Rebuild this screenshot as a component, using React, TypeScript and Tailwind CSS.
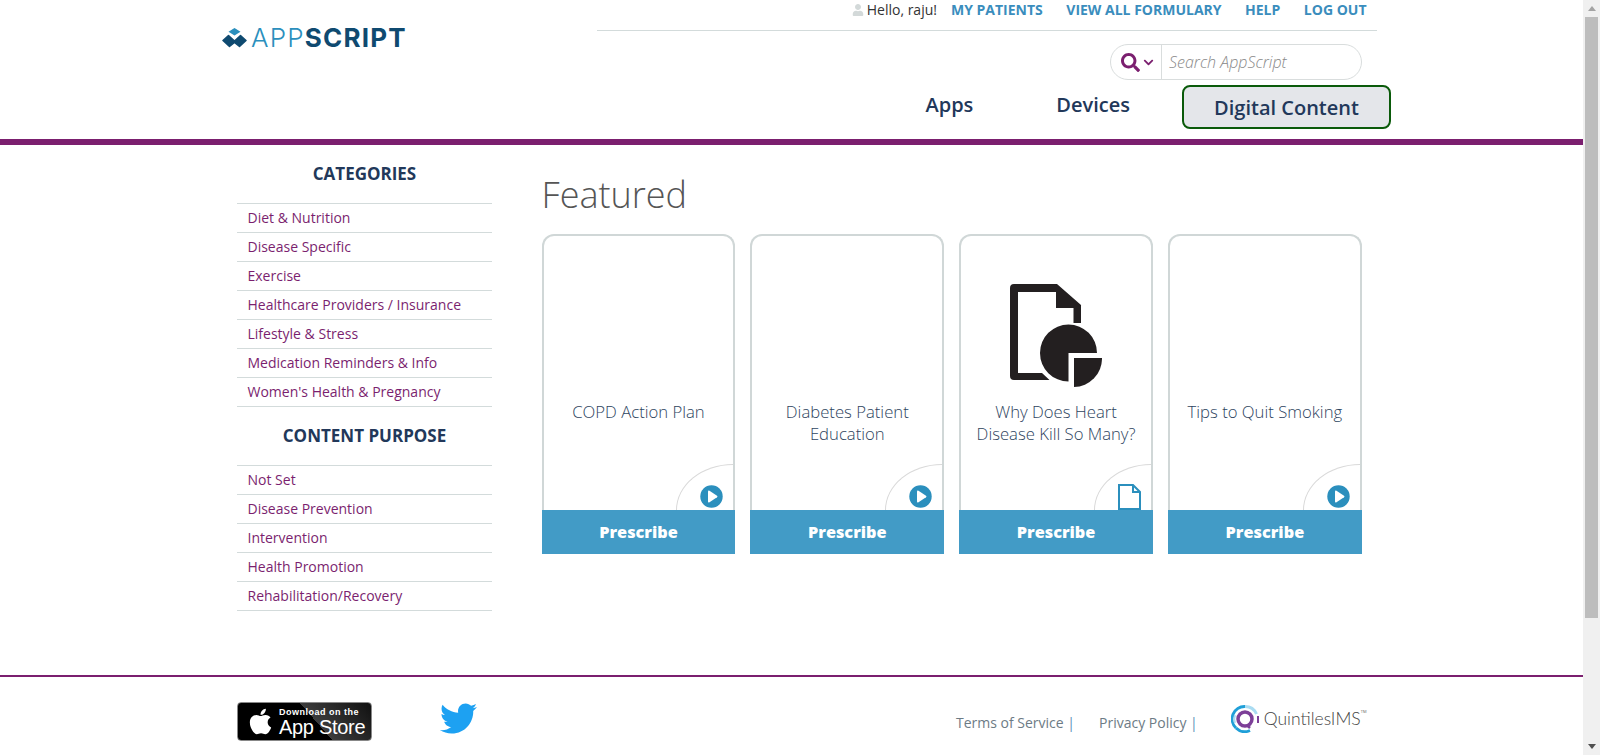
import { FaApple, FaChevronDown, FaSearch, FaTwitter, FaUser } from "react-icons/fa"

const categories = [
  "Diet & Nutrition",
  "Disease Specific",
  "Exercise",
  "Healthcare Providers / Insurance",
  "Lifestyle & Stress",
  "Medication Reminders & Info",
  "Women's Health & Pregnancy",
]

const purposes = [
  "Not Set",
  "Disease Prevention",
  "Intervention",
  "Health Promotion",
  "Rehabilitation/Recovery",
]

const cards = [
  { title: "COPD Action Plan", kind: "video", thumb: false },
  { title: "Diabetes Patient Education", kind: "video", thumb: false },
  { title: "Why Does Heart Disease Kill So Many?", kind: "doc", thumb: true },
  { title: "Tips to Quit Smoking", kind: "video", thumb: false },
]

function Logo() {
  return (
    <div className="flex items-center gap-[4px] h-[20px]">
      <svg width="25" height="20" viewBox="0 0 25 20">
        <path d="M12.500 0l6 3.800-6 3.800-6-3.800z" fill="#2b8fbd" />
        <path
          d="M6.500 7.500l6 5.500 6-5.500 5.500 5-6.500 6-5-4-5 4-6.500-6z"
          fill="#0f4a70"
          stroke="#0f4a70"
          strokeWidth="1.500"
          strokeLinejoin="round"
        />
      </svg>
      <div className="text-[26px] leading-[20px] font-['Inter',sans-serif] tracking-[1.200px]">
        <span className="font-light text-[#2b8fbd]">APP</span>
        <span className="font-bold text-[#0f4a70]">SCRIPT</span>
      </div>
    </div>
  )
}

function PlayIcon() {
  return (
    <svg width="23" height="23" viewBox="0 0 23 23">
      <circle cx="11.500" cy="11.500" r="11.200" fill="#2b8fbd" />
      <path d="M8 6.500a1 1 0 0 1 1.500-.8l7.500 5a1 1 0 0 1 0 1.600l-7.500 5a1 1 0 0 1-1.500-.8z" fill="#fff" />
    </svg>
  )
}

function FileIcon() {
  return (
    <svg width="23" height="26" viewBox="0 0 23 26" fill="none" stroke="#2b8fbd" strokeWidth="2">
      <path d="M1 1h14l7 7v17H1z" />
      <path d="M15 1v7h7" />
    </svg>
  )
}

function DocChartIcon() {
  return (
    <svg width="92" height="103" viewBox="0 0 92 103" fill="#231f20">
      <path d="M4 0H47L71 21a2 2 0 0 1 0 1V39H63.500V24H46V8H8V89H32L39.500 96H4a4 4 0 0 1-4-4V4a4 4 0 0 1 4-4z" />
      <path d="M58.500 97.500A28.500 28.500 0 1 1 87 69H58.500z" />
      <path d="M64 74H92A28.500 28.500 0 0 1 64 103z" />
    </svg>
  )
}

function QuintilesMark() {
  return (
    <svg width="28" height="28" viewBox="0 0 28 28" fill="none">
      <path d="M14 1.500A12.500 12.500 0 0 0 5 23" stroke="#1f9fd8" strokeWidth="3" />
      <path d="M5 23A12.500 12.500 0 0 0 19 25.500" stroke="#1f9fd8" strokeWidth="3" />
      <path d="M14 1.500A12.500 12.500 0 0 1 25.500 9" stroke="#a9dcf2" strokeWidth="3" />
      <path d="M4 10A10.500 10.500 0 0 0 4 18" stroke="#a9dcf2" strokeWidth="2" />
      <circle cx="14" cy="14" r="7" stroke="#7d3f98" strokeWidth="3.500" />
      <path d="M16 20l3 3" stroke="#7d3f98" strokeWidth="2.500" />
      <rect x="26" y="11" width="2" height="7" fill="#7d3f98" />
    </svg>
  )
}

function LinkList({ items }: { items: string[] }) {
  return (
    <ul className="border-t border-[#d3dbdb]">
      {items.map((item) => (
        <li
          key={item}
          className="h-[29px] border-b border-[#d3dbdb] pl-[10.500px] text-[14px] leading-[28px] text-[#7b1f6f]"
        >
          {item}
        </li>
      ))}
    </ul>
  )
}

function Card({ title, kind, thumb }: { title: string; kind: string; thumb: boolean }) {
  return (
    <div className="flex flex-col">
      <div className="relative h-[276px] rounded-t-[12px] border-2 border-b-0 border-[#d0d7d7] overflow-hidden">
        <div className="h-[165px] flex items-end justify-center pb-[14px]">
          {thumb && <DocChartIcon />}
        </div>
        <p className="px-[10px] text-center text-[16.700px] leading-[22px] font-light text-[#2e4460]">{title}</p>
        <div className="absolute right-0 bottom-0 w-[57px] h-[46px] rounded-tl-[100%] border-t border-l border-[#d9d9d9]" />
        <div className="absolute right-[10px] bottom-0">
          {kind === "video" ? <div className="mb-[2px]"><PlayIcon /></div> : <FileIcon />}
        </div>
      </div>
      <div className="h-[44px] bg-[#429bc6] text-center text-[16.300px] leading-[45px] font-extrabold text-white">
        Prescribe
      </div>
    </div>
  )
}

export default function App() {
  return (
    <div className="flex h-[755px] overflow-hidden bg-white font-['Open_Sans',sans-serif]">
      <div className="flex-1 min-w-0">
        <header className="flex h-[145px] border-b-[6px] border-[#7b1f6f]">
          <div className="w-[597px] pl-[222px] pt-[28px]">
            <Logo />
          </div>
          <div className="w-[780px]">
            <div className="h-[31px] border-b border-[#d3dbdb] flex justify-end pr-[10.500px] text-[14px] leading-[20px]">
              <span className="flex items-center gap-[3px] h-[20px] mr-[14px] text-[#333]">
                <FaUser className="text-[#d3d9d9] text-[12px]" />
                Hello, raju!
              </span>
              <div className="flex gap-[23.500px] font-bold text-[#3a8dbd]">
                <span>MY PATIENTS</span>
                <span>VIEW ALL FORMULARY</span>
                <span>HELP</span>
                <span>LOG OUT</span>
              </div>
            </div>
            <div className="flex justify-end pr-[15px] mt-[13px]">
              <div className="flex h-[36px] w-[252px] rounded-[18px] border border-[#d9dddd]">
                <div className="w-[51px] flex items-center pl-[10px] gap-[3px] border-r border-[#d9dddd] text-[#7b1f6f]">
                  <FaSearch className="text-[19px]" />
                  <FaChevronDown className="text-[11px]" />
                </div>
                <div className="pl-[7px] text-[16px] leading-[34px] italic font-light text-[#888]">Search AppScript</div>
              </div>
            </div>
            <nav className="flex items-center justify-end h-[44px] mt-[5px] -mr-[14px] text-[20px] font-semibold text-[#22385a]">
              <span className="mr-[83px] -mt-[4px]">Apps</span>
              <span className="mr-[52px] -mt-[4px]">Devices</span>
              <span className="w-[209px] h-[44px] text-center leading-[41px] rounded-[8px] border-2 border-[#0a5a0a] bg-[#e4e6ea]">
                Digital Content
              </span>
            </nav>
          </div>
        </header>

        <main className="flex h-[530px] pl-[237px]">
          <aside className="w-[255px] pt-[17px]">
            <h3 className="mb-[17px] text-center text-[17px] leading-[24px] font-bold text-[#22385a]">CATEGORIES</h3>
            <LinkList items={categories} />
            <h3 className="mt-[17px] mb-[17px] text-center text-[17px] leading-[24px] font-bold text-[#22385a]">
              CONTENT PURPOSE
            </h3>
            <LinkList items={purposes} />
          </aside>
          <section className="ml-[49.600px] w-[820.200px] pt-[30px]">
            <h1 className="mb-[19px] text-[36px] leading-[40px] font-light text-[#555]">Featured</h1>
            <div className="grid grid-cols-4 gap-[15px]">
              {cards.map((card) => (
                <Card key={card.title} {...card} />
              ))}
            </div>
          </section>
        </main>

        <footer className="flex h-[80px] border-t-2 border-[#7b1f6f] pl-[237px] pt-[25px]">
          <div className="relative flex items-center w-[135px] h-[39px] rounded-[4px] border border-[#888] bg-[linear-gradient(49deg,#000_57%,#3c3c3c_57%,#111_100%)] text-white">
            <FaApple className="ml-[8px] text-[29px]" />
            <div className="ml-[4px] pt-[2px] font-['Liberation_Sans',sans-serif]">
              <div className="text-[9px] leading-[10px] font-bold tracking-[0.500px]">Download on the</div>
              <div className="text-[20px] leading-[21px] tracking-[-0.300px]">App Store</div>
            </div>
          </div>
          <FaTwitter className="ml-[68px] mt-[-2px] text-[37px] text-[#1da1f2]" />
          <div className="ml-[479px] mt-[11px] flex text-[14px] leading-[20px] text-[#6d7b85]">
            <span>
              Terms of Service <span className="text-[#5a8fb8]">|</span>
            </span>
            <span className="ml-[24px]">
              Privacy Policy <span className="text-[#5a8fb8]">|</span>
            </span>
          </div>
          <div className="ml-[33px] mt-[3px] flex items-start">
            <QuintilesMark />
            <span className="ml-[5px] mt-[3px] font-['Lato',sans-serif] text-[17.500px] leading-[22px] font-light text-[#444]">
              QuintilesIMS
            </span>
            <span className="mt-[3px] text-[4px] leading-[8px] text-[#666]">TM</span>
          </div>
        </footer>
      </div>

      <div className="flex flex-col w-[17px] bg-[#f0f0f0]">
        <div className="h-[17px] flex items-center justify-center">
          <svg width="8" height="5" viewBox="0 0 8 5">
            <path d="M4 0l4 5H0z" fill="#a3a3a3" />
          </svg>
        </div>
        <div className="mx-[2px] h-[601px] bg-[#bdbdbd]" />
        <div className="mt-auto h-[17px] flex items-center justify-center">
          <svg width="8" height="5" viewBox="0 0 8 5">
            <path d="M0 0h8L4 5z" fill="#505050" />
          </svg>
        </div>
      </div>
    </div>
  )
}
